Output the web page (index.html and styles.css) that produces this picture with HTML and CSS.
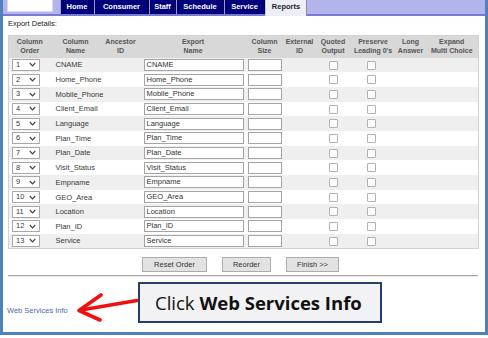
FILE: index.html
```html
<!DOCTYPE html>
<html lang="en">
<head>
    <meta charset="UTF-8">
    <title>Export Details</title>
    <link rel="stylesheet" href="styles.css">
</head>
<body>
<div class="frame">
    <div class="topbar">
        <div class="search"></div>
        <ul class="tabs">
            <li class="t-home">Home</li>
            <li class="t-consumer">Consumer</li>
            <li class="t-staff">Staff</li>
            <li class="t-schedule">Schedule</li>
            <li class="t-service">Service</li>
            <li class="t-reports active">Reports</li>
        </ul>
    </div>

    <div class="content">
        <div class="title">Export Details:</div>
        <table class="export">
            <thead>
            <tr>
                <th class="c-order">Column<br>Order</th>
                <th class="c-name">Column<br>Name</th>
                <th class="c-anc">Ancestor<br>ID</th>
                <th class="c-exp">Export<br>Name</th>
                <th class="c-size">Column<br>Size</th>
                <th class="c-ext">External<br>ID</th>
                <th class="c-quo">Quoted<br>Output</th>
                <th class="c-pre">Preserve<br>Leading 0's</th>
                <th class="c-long">Long<br>Answer</th>
                <th class="c-multi">Expand<br>Multi Choice</th>
            </tr>
            </thead>
            <tbody id="rows"></tbody>
        </table>

        <div class="actions">
            <button>Reset Order</button>
            <button>Reorder</button>
            <button>Finish &gt;&gt;</button>
        </div>
        <div class="rule"></div>
        <a class="ws-link" href="#">Web Services Info</a>
    </div>

    <svg class="arrow" viewBox="77 290 66 34" width="66" height="34">
        <path d="M137 300.5 L84 309.5" />
        <path d="M101 295 L79 310.5 L100 320" />
    </svg>
    <div class="callout">Click <b>Web Services Info</b></div>
</div>

<script>
    var fields=['CNAME','Home_Phone','Mobile_Phone','Client_Email','Language','Plan_Time','Plan_Date','Visit_Status','Empname','GEO_Area','Location','Plan_ID','Service'];
    var tbody=document.getElementById('rows');
    var html='';
    for(var i=0;i<fields.length;i++){
        html+='<tr>'+
            '<td class="c-order"><span class="sel">'+(i+1)+
            '<svg width="7" height="5" viewBox="0 0 7 5"><path d="M0.8 1 L3.5 3.8 L6.2 1"/></svg></span></td>'+
            '<td class="c-name">'+fields[i]+'</td>'+
            '<td></td>'+
            '<td class="c-exp"><span class="box wide">'+fields[i]+'</span></td>'+
            '<td class="c-size"><span class="box small"></span></td>'+
            '<td></td>'+
            '<td class="c-quo"><span class="chk"></span></td>'+
            '<td class="c-pre"><span class="chk"></span></td>'+
            '<td></td>'+
            '<td></td>'+
            '</tr>';
    }
    tbody.innerHTML=html;
</script>
</body>
</html>
```

FILE: styles.css
```css
* {
    margin: 0;
    padding: 0;
    box-sizing: border-box;
}
body {
    background: #fff;
    font-family: "Liberation Sans", Arial, sans-serif;
    font-size: 7.5px;
    color: #333;
}
ul, li {
    list-style: none;
}
.frame {
    position: relative;
    width: 488px;
    height: 335px;
    border: 3px solid #4f81bd;
    border-top: none;
}

/* top navigation */
.topbar {
    display: flex;
    height: 16px;
    padding-left: 4px;
    background: #b4b4ec;
    border-bottom: 2px solid #7a7ad4;
}
.search {
    width: 46px;
    height: 12px;
    background: #fff;
    border: 1px solid #d8d8f4;
    border-top: none;
}
.tabs {
    display: flex;
    margin-left: 7px;
    height: 14px;
}
.tabs li {
    height: 14px;
    line-height: 13px;
    text-align: center;
    background: #00007c;
    color: #fff;
    font-weight: bold;
    font-size: 7.5px;
    border-left: 1px solid #9a9ac8;
    border-right: 1px solid #000040;
}
.tabs .t-home { width: 34px; }
.tabs .t-consumer { width: 55px; }
.tabs .t-staff { width: 27px; }
.tabs .t-schedule { width: 48px; }
.tabs .t-service { width: 41px; }
.tabs .t-reports { width: 42px; }
.tabs .active {
    height: 16px;
    background: #eeeef6;
    color: #223;
    border-left: 1px solid #c8c8e0;
    border-right: 1px solid #8a8ab0;
}

/* content */
.content {
    padding: 0 7px 0 5px;
}
.title {
    padding-top: 2px;
    line-height: 12px;
    font-size: 7.5px;
    color: #222;
}
.export {
    width: 470px;
    margin-top: 5px;
    border-collapse: collapse;
    border: 1px solid #d2d2d2;
    table-layout: fixed;
}
.export th {
    height: 22px;
    background: #d8d8d8;
    color: #555;
    font-weight: bold;
    font-size: 7px;
    line-height: 8.5px;
    text-align: center;
    vertical-align: middle;
}
.export td {
    height: 14.7px;
    padding: 0;
    vertical-align: middle;
    color: #3a3a3a;
}
.export tbody tr:nth-child(odd) {
    background: #efefef;
}
.export tbody tr:nth-child(even) {
    background: #fff;
}
.export .c-order { width: 42px; }
.export .c-name { width: 50px; }
.export .c-anc { width: 40px; }
.export .c-exp { width: 105px; }
.export .c-size { width: 38px; }
.export .c-ext { width: 32px; }
.export .c-quo { width: 35px; }
.export .c-pre { width: 45px; }
.export .c-long { width: 30px; }
.export .c-multi { width: 53px; }

.export td.c-order { padding-left: 3px; }
.export td.c-name { padding-left: 5px; }
.export td.c-exp { padding-left: 3px; }
.export td.c-size { padding-left: 2px; }
.export td.c-quo,
.export td.c-pre { text-align: center; }
.export td.c-pre { padding-right: 4px; }

.sel {
    display: flex;
    align-items: center;
    justify-content: space-between;
    width: 28px;
    height: 12px;
    padding: 0 3px 0 3px;
    background: #fff;
    border: 1px solid #a8a8a8;
    line-height: 10px;
}
.sel svg path {
    fill: none;
    stroke: #444;
    stroke-width: 1.2;
}
.box {
    display: block;
    height: 12px;
    padding-left: 2px;
    background: #fff;
    border: 1px solid #a4a4a4;
    line-height: 10px;
    color: #333;
}
.box.wide { width: 100px; }
.box.small { width: 34px; }
.chk {
    display: inline-block;
    width: 9px;
    height: 9px;
    vertical-align: middle;
    background: #fff;
    border: 1px solid #b2b2b2;
    border-radius: 1px;
}

/* buttons */
.actions {
    display: flex;
    justify-content: center;
    gap: 15px;
    width: 470px;
    margin-top: 8px;
    padding-right: 5px;
}
.actions button {
    height: 15px;
    padding: 0 10px;
    font-family: "Liberation Sans", Arial, sans-serif;
    font-size: 7.5px;
    color: #333;
    background: #e2e2e2;
    border: 1px solid #acacac;
}
.actions button:first-child {
    padding: 0 11px;
}
.rule {
    width: 470px;
    margin-top: 3px;
    border-top: 1px solid #a6a6a6;
    border-bottom: 1px solid #e8e8e8;
}
.ws-link {
    display: inline-block;
    margin-top: 29px;
    margin-left: -1px;
    font-size: 7.5px;
    color: #4a6da6;
    text-decoration: none;
}

/* annotation */
.arrow {
    position: absolute;
    left: 74px;
    top: 290px;
}
.arrow path {
    fill: none;
    stroke: #f01010;
    stroke-width: 3.6;
    stroke-linecap: round;
    stroke-linejoin: round;
}
.callout {
    position: absolute;
    left: 135px;
    top: 282px;
    width: 244px;
    height: 41px;
    padding-left: 15px;
    background: #f2f2f4;
    border: 2px solid #23406a;
    font-family: "Open Sans", "Noto Sans", sans-serif;
    font-size: 18.5px;
    line-height: 37px;
    color: #111;
}
.callout b {
    font-weight: bold;
}
```
